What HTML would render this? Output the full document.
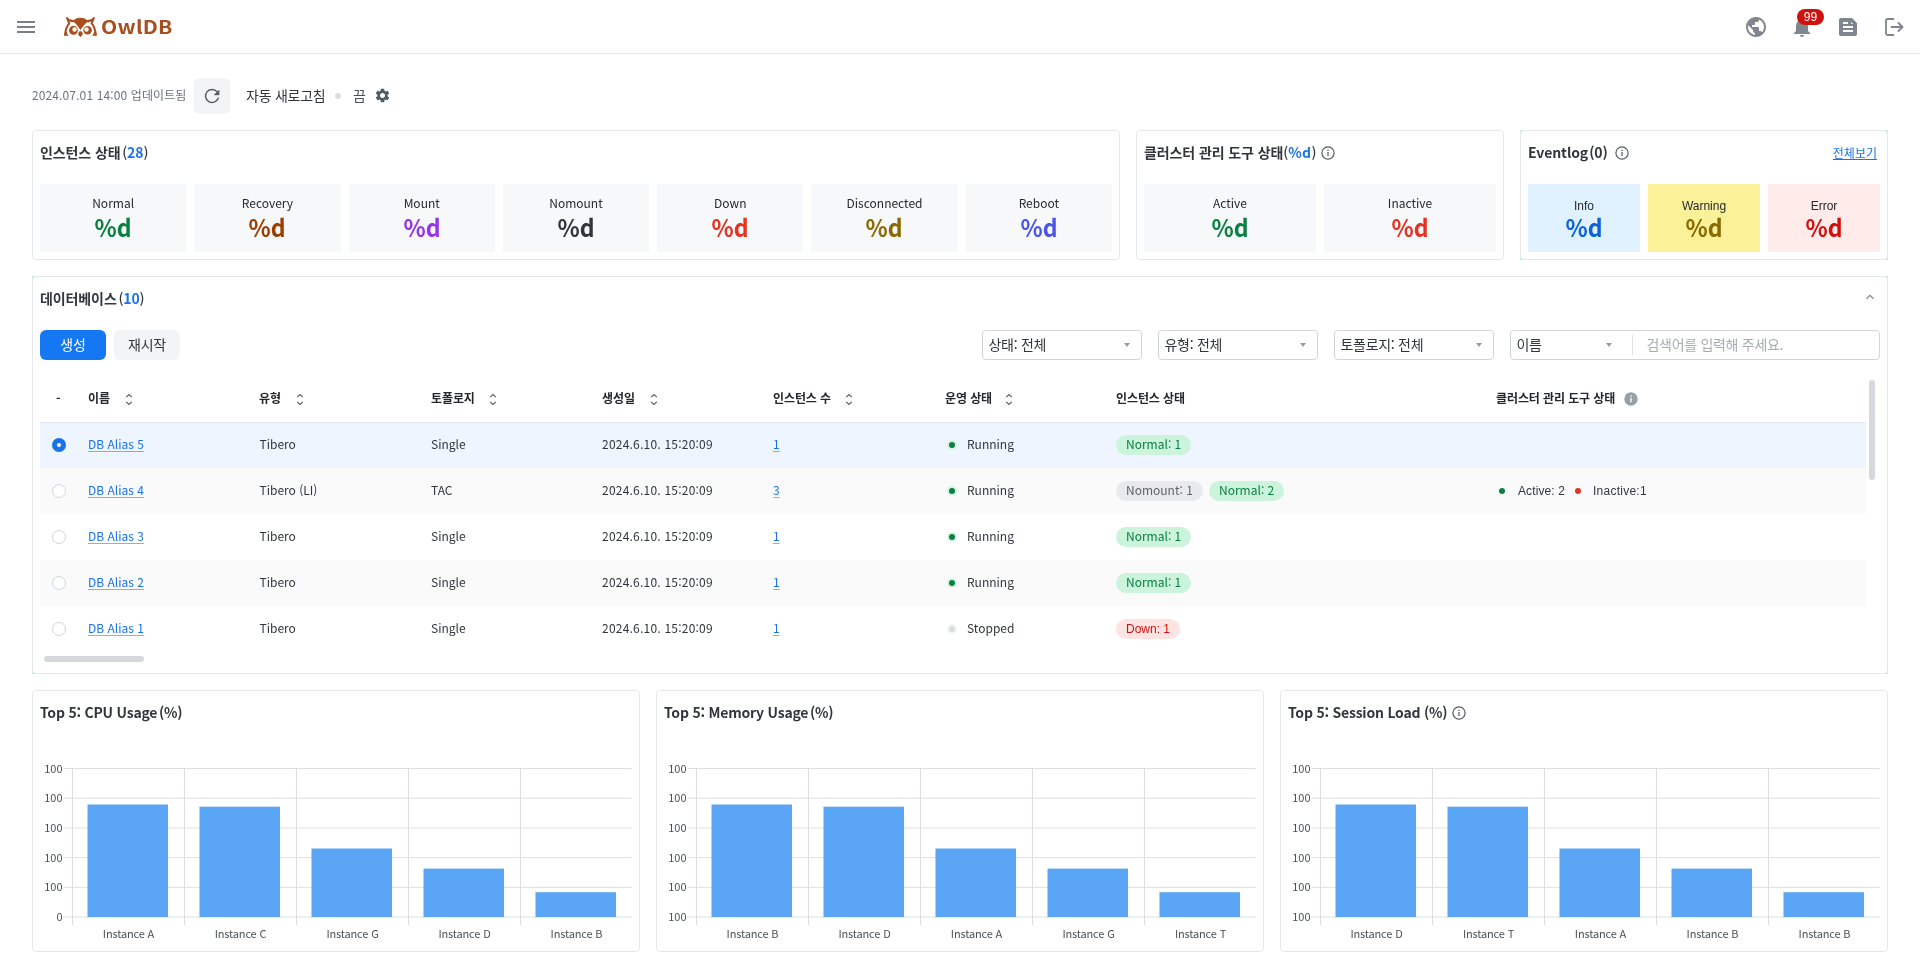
<!DOCTYPE html>
<html lang="ko">
<head>
<meta charset="utf-8">
<title>OwlDB</title>
<style>
*{box-sizing:border-box;margin:0;padding:0}
html,body{width:1920px;height:980px;overflow:hidden;background:#fff}
body{font-family:"Noto Sans CJK KR","Liberation Sans",sans-serif;font-size:12px;color:#32363c;position:relative}
#root{position:absolute;left:0;top:0;width:1920px;height:980px;will-change:transform}
svg{display:block;position:absolute;overflow:visible}
a{color:#1a73e8;text-decoration:underline;text-decoration-color:rgba(26,115,232,.55);text-underline-offset:2px}
/* header */
#hdr{position:absolute;left:0;top:0;width:1920px;height:54px;border-bottom:1px solid #e5e7eb;background:#fff}
#brand{position:absolute;left:100.800px;top:11.200px;height:30px;line-height:30px;font-family:"Noto Sans CJK KR","Liberation Sans",sans-serif;font-weight:700;font-size:18.200px;letter-spacing:.2px;transform-origin:0 50%;transform:scaleX(1.16);color:#a94f1f;white-space:nowrap}
#badge{position:absolute;left:1797px;top:9px;width:27px;height:16px;border-radius:8px;background:#d0120f;color:#fff;font-size:12px;line-height:16px;text-align:center;font-family:"Liberation Sans",sans-serif}
/* toolbar */
#upd{position:absolute;left:32px;top:85px;letter-spacing:.12px;height:20px;line-height:20px;font-size:12px;color:#6b7280;white-space:nowrap}
#rbtn{position:absolute;left:194px;top:78px;width:36px;height:36px;border-radius:5px;background:#f3f4f6}
#auto{position:absolute;left:246px;top:84px;letter-spacing:-.25px;height:22px;line-height:22px;font-size:14px;color:#32363c;white-space:nowrap}
#dot{position:absolute;left:335px;top:93px;width:6px;height:6px;border-radius:50%;background:#dadde3}
#off{position:absolute;left:353px;top:84px;height:22px;line-height:22px;font-size:14px;color:#4b5158;white-space:nowrap}
/* cards */
.card{position:absolute;border:1px solid #e5e7eb;border-radius:4px;background:#fff}
.ctitle{position:absolute;left:7px;top:9px;height:24px;line-height:24px;font-size:14px;font-weight:700;letter-spacing:-.1px;color:#32363c;white-space:nowrap}
.ctitle b{font-weight:700;color:#1a73e8}
.ctitle i{font-style:normal;font-weight:500}
.ctitle i.o{margin-left:1.700px}
.tiles{position:absolute;left:7px;right:7px;top:53px;height:68px;display:flex;gap:8px}
.tile{flex:1 1 0;background:#f7f8fa;text-align:center}
.tile .l{margin-top:10px;font-size:12px;line-height:18px;height:18px;color:#25282d}
.tile .v{font-size:24px;line-height:30px;height:30px;font-weight:700;margin-top:0px;transform:scaleX(.96)}
.ev .l{margin-top:13px;font-family:"Liberation Sans","Noto Sans CJK KR",sans-serif;font-size:12px}
.ev .v{margin-top:-3.200px}
#viewall{position:absolute;right:10px;top:12.500px;font-size:12px;line-height:18px;color:#1a73e8;text-decoration:underline;white-space:nowrap}
/* db */
.btn{position:absolute;top:53px;width:66px;height:30px;border-radius:6px;font-size:14px;line-height:28.600px;text-align:center;letter-spacing:-.25px}
.sel{position:absolute;top:53px;height:30px;border:1px solid #d1d5db;border-radius:4px;background:#fff;font-size:14px;line-height:26px;padding-left:5.500px;letter-spacing:-.3px;color:#32363c;white-space:nowrap}
.sel i{position:absolute;right:11px;top:12px;width:0;height:0;border-left:3.5px solid transparent;border-right:3.5px solid transparent;border-top:4px solid #959ba2}
.th{position:absolute;top:109px;letter-spacing:-.1px;height:24px;line-height:24px;font-size:12px;font-weight:700;color:#24272b;white-space:nowrap}
.row{position:absolute;left:7px;width:1826px;height:46px}
.row span,.row a{position:absolute;top:11px;height:22px;line-height:22px;font-size:12px;white-space:nowrap}
.row span{color:#32363c}
.rd{position:absolute;left:12px;top:16px;width:14px;height:14px;border-radius:50%;border:1px solid #d1d5db;background:#fff}
.rd.on{border:none;background:#1a73e8}
.rd.on:after{content:"";position:absolute;left:4.800px;top:4.800px;width:4.400px;height:4.400px;border-radius:50%;background:#fff}
.sd{position:absolute;top:20px;width:6px;height:6px;border-radius:50%}
.pill{position:absolute;top:13px;height:20px;line-height:18px;border-radius:10px;font-size:12px;padding:0 10px;white-space:nowrap}
.pg{background:#ccf3dc;color:#0b8043}
.pn{background:#e8eaed;color:#5f6368}
.pr{background:#fde3e1;color:#d0120f;font-family:"Liberation Sans",sans-serif;font-size:12px;line-height:20px}
</style>
</head>
<body>
<div id="root">
<div id="hdr">
  <svg style="left:14px;top:15px" width="24" height="24" viewBox="0 0 24 24"><path fill="#787f88" d="M3 18h18v-2H3v2zm0-5h18v-2H3v2zm0-7v2h18V6H3z"/></svg>
  <svg style="left:60px;top:12px" width="44" height="28" viewBox="0 0 1540 980">
<g fill="#a94f1f">
<path d="M215,175 C300,240 400,278 485,288 C545,232 625,205 715,205 C805,205 885,232 945,288 C1030,278 1130,240 1215,175 L1128,335 C1040,355 970,362 920,372 C860,430 780,525 715,628 C650,525 580,430 520,372 C470,362 400,355 312,335 Z"/>
<path d="M140,835 L310,835 C270,800 250,760 240,690 L175,690 Z"/>
<path d="M1290,835 L1120,835 C1160,800 1180,760 1190,690 L1255,690 Z"/>
<circle cx="470" cy="640" r="155"/><circle cx="966" cy="640" r="150"/>
<path d="M715,872 C660,832 632,790 638,750 C645,700 690,678 715,678 C745,678 792,700 797,750 C800,790 770,832 715,872Z"/>
</g>
<g fill="none" stroke="#a94f1f" stroke-width="72" stroke-linejoin="miter" stroke-miterlimit="6">
<path d="M236,190 L322,398 C245,480 195,620 175,810"/>
<path d="M1194,190 L1108,398 C1185,480 1235,620 1255,810"/>
</g>
<circle cx="510" cy="612" r="78" fill="#fff"/><circle cx="927" cy="612" r="76" fill="#fff"/>
</svg>
  <div id="brand">OwlDB</div>
  
<svg style="left:1744px;top:15px" width="24" height="24" viewBox="0 0 24 24"><path fill="#80868f" d="M12 2C6.48 2 2 6.48 2 12s4.48 10 10 10 10-4.48 10-10S17.52 2 12 2zm-1 17.93c-3.95-.49-7-3.85-7-7.930 0-.62.08-1.210.21-1.790L9 15v1c0 1.100.9 2 2 2v1.930zm6.900-2.540c-.26-.81-1-1.390-1.900-1.390h-1v-3c0-.55-.45-1-1-1H8v-2h2c.55 0 1-.45 1-1V7h2c1.100 0 2-.9 2-2v-.41c2.930 1.190 5 4.060 5 7.410 0 2.080-.8 3.970-2.100 5.390z"/></svg>
<svg style="left:1790px;top:15px" width="24" height="24" viewBox="0 0 24 24"><path fill="#80868f" d="M12 22c1.100 0 2-.9 2-2h-4c0 1.100.89 2 2 2zm6-6v-5c0-3.070-1.640-5.640-4.500-6.320V4c0-.83-.67-1.500-1.500-1.500s-1.500.67-1.500 1.500v.68C7.630 5.360 6 7.920 6 11v5l-2 2v1h16v-1l-2-2z"/></svg>
<svg style="left:1836px;top:15px" width="24" height="24" viewBox="0 0 24 24"><path fill="#80868f" d="M16 3H5c-1.100 0-2 .9-2 2v14c0 1.100.9 2 2 2h14c1.100 0 2-.9 2-2V8l-5-5zM7 7h5v2H7V7zm10 10H7v-2h10v2zm0-4H7v-2h10v2zm-2-4V7l2 2h-2z"/></svg>
<svg style="left:1882px;top:15px" width="24" height="24" viewBox="0 0 24 24"><g fill="none" stroke="#80868f" stroke-width="1.8" stroke-linecap="round" stroke-linejoin="round"><path d="M11.500 4H5.500c-.83 0-1.500.67-1.500 1.500v13c0 .83.67 1.500 1.500 1.500h6"/><path d="M9.500 12h11M16.500 8l4 4-4 4"/></g></svg>

  <div id="badge">99</div>
</div>
<div id="upd">2024.07.01 14:00 업데이트됨</div>
<div id="rbtn"></div>
<svg style="left:0;top:0" width="240" height="120" viewBox="0 0 240 120"><path d="M217.200 91.900A6.550 6.550 0 1 0 218.200 98.200" fill="none" stroke="#555b65" stroke-width="1.500" stroke-linecap="round"/><path d="M219.100 90.100V94.900H214z" fill="#555b65" stroke="#555b65" stroke-width=".4" stroke-linejoin="round"/></svg>
<div id="auto">자동 새로고침</div>
<div id="dot"></div>
<div id="off">끔</div>
<svg style="left:373.500px;top:87px" width="17" height="17" viewBox="0 0 24 24"><path fill="#555b65" d="M19.140 12.940c.04-.3.060-.61.060-.94 0-.32-.02-.64-.07-.94l2.030-1.580c.18-.14.230-.41.120-.61l-1.920-3.320c-.12-.22-.37-.29-.59-.22l-2.390.96c-.5-.38-1.030-.7-1.620-.94l-.36-2.540c-.04-.24-.24-.41-.48-.41h-3.840c-.24 0-.43.170-.47.410l-.36 2.540c-.59.240-1.130.57-1.620.94l-2.390-.96c-.22-.08-.47 0-.59.220L2.740 8.870c-.12.210-.08.470.12.610l2.030 1.580c-.05.3-.09.630-.09.940s.02.640.07.940l-2.030 1.580c-.18.140-.23.410-.12.610l1.920 3.320c.12.220.37.290.59.220l2.390-.96c.5.380 1.030.7 1.620.94l.36 2.540c.05.240.24.410.48.410h3.840c.24 0 .44-.17.470-.41l.36-2.540c.59-.24 1.130-.56 1.620-.94l2.390.96c.22.080.47 0 .59-.22l1.920-3.320c.12-.22.070-.47-.12-.61l-2.010-1.580zM12 15.600c-1.980 0-3.600-1.620-3.600-3.600s1.620-3.600 3.600-3.600 3.600 1.620 3.600 3.600-1.620 3.600-3.600 3.600z"/></svg>

<div class="card" style="left:32px;top:130px;width:1088px;height:130px">
  <div class="ctitle">인스턴스 상태<i class="o">(</i><b>28</b><i>)</i></div>
  <div class="tiles">
    <div class="tile"><div class="l">Normal</div><div class="v" style="color:#0b8043">%d</div></div>
    <div class="tile"><div class="l">Recovery</div><div class="v" style="color:#9a3f00">%d</div></div>
    <div class="tile"><div class="l">Mount</div><div class="v" style="color:#9334e6">%d</div></div>
    <div class="tile"><div class="l">Nomount</div><div class="v" style="color:#32363c">%d</div></div>
    <div class="tile"><div class="l">Down</div><div class="v" style="color:#e53323">%d</div></div>
    <div class="tile"><div class="l">Disconnected</div><div class="v" style="color:#8a6a00">%d</div></div>
    <div class="tile"><div class="l">Reboot</div><div class="v" style="color:#4b55e8">%d</div></div>
  </div>
</div>

<div class="card" style="left:1136px;top:130px;width:368px;height:130px">
  <div class="ctitle">클러스터 관리 도구 상태<i>(</i><b style="letter-spacing:.4px">%d</b><i>)</i></div>
  <svg style="left:184px;top:15px" width="14" height="14" viewBox="0 0 14 14"><circle cx="7" cy="7" r="6.100" fill="none" stroke="#555b65" stroke-width="1.200"/><rect x="6.400" y="6" width="1.200" height="4" fill="#555b65"/><rect x="6.350" y="3.700" width="1.300" height="1.300" fill="#555b65"/></svg>
  <div class="tiles">
    <div class="tile"><div class="l">Active</div><div class="v" style="color:#0b8043">%d</div></div>
    <div class="tile"><div class="l">Inactive</div><div class="v" style="color:#e53323">%d</div></div>
  </div>
</div>

<div style="position:absolute;left:1520px;top:130px;width:368px;height:130px;background:#c3f5d6"></div>
<div class="card" style="left:1520px;top:130px;width:368px;height:130px">
  <div class="ctitle">Eventlog<i class="o" style="font-weight:700;margin-left:1px">(</i><b style="color:inherit">0</b><i style="font-weight:700">)</i></div>
  <svg style="left:94px;top:15px" width="14" height="14" viewBox="0 0 14 14"><circle cx="7" cy="7" r="6.100" fill="none" stroke="#555b65" stroke-width="1.200"/><rect x="6.400" y="6" width="1.200" height="4" fill="#555b65"/><rect x="6.350" y="3.700" width="1.300" height="1.300" fill="#555b65"/></svg>
  <div id="viewall">전체보기</div>
  <div class="tiles ev">
    <div class="tile" style="background:#e0f2ff"><div class="l">Info</div><div class="v" style="color:#0b63d6">%d</div></div>
    <div class="tile" style="background:#fbf199"><div class="l">Warning</div><div class="v" style="color:#8a6a00">%d</div></div>
    <div class="tile" style="background:#ffebe9"><div class="l">Error</div><div class="v" style="color:#d0120f">%d</div></div>
  </div>
</div>

<div style="position:absolute;left:32px;top:276px;width:1856px;height:398px;background:#c3f5d6"></div>
<div class="card" id="db" style="left:32px;top:276px;width:1856px;height:398px">
  <div class="ctitle">데이터베이스<i class="o">(</i><b>10</b><i>)</i></div>
  <svg style="left:1831px;top:16px" width="12" height="8" viewBox="0 0 12 8"><path d="M2.500 5.800L6 2.300l3.500 3.500" fill="none" stroke="#858b93" stroke-width="1.300"/></svg>
  <div class="btn" style="left:7px;background:#1677f2;color:#fff">생성</div>
  <div class="btn" style="left:81px;background:#f3f4f6;color:#32363c">재시작</div>
  <div class="sel" style="left:949px;width:160px">상태: 전체<i></i></div>
  <div class="sel" style="left:1125px;width:160px">유형: 전체<i></i></div>
  <div class="sel" style="left:1301px;width:160px">토폴로지: 전체<i></i></div>
  <div class="sel" style="left:1477px;width:370px">이름<i style="left:95px;right:auto"></i><em style="position:absolute;left:121px;top:4px;width:1px;height:20px;background:#dfe1e5"></em><span style="position:absolute;left:135.500px;top:0;font-size:14px;letter-spacing:-.3px;color:#a7acb3">검색어를 입력해 주세요.</span></div>
  <div class="th" style="left:23px">-</div><div class="th" style="left:55px">이름</div><svg style="left:92px;top:116px" width="8" height="13" viewBox="0 0 8 13"><path d="M1.200 4.200L4 1.500l2.800 2.700M1.200 8.800L4 11.500l2.800-2.700" fill="none" stroke="#555b65" stroke-width="1.100"/></svg><div class="th" style="left:226px">유형</div><svg style="left:263px;top:116px" width="8" height="13" viewBox="0 0 8 13"><path d="M1.200 4.200L4 1.500l2.800 2.700M1.200 8.800L4 11.500l2.800-2.700" fill="none" stroke="#555b65" stroke-width="1.100"/></svg><div class="th" style="left:398px">토폴로지</div><svg style="left:456px;top:116px" width="8" height="13" viewBox="0 0 8 13"><path d="M1.200 4.200L4 1.500l2.800 2.700M1.200 8.800L4 11.500l2.800-2.700" fill="none" stroke="#555b65" stroke-width="1.100"/></svg><div class="th" style="left:569px">생성일</div><svg style="left:617px;top:116px" width="8" height="13" viewBox="0 0 8 13"><path d="M1.200 4.200L4 1.500l2.800 2.700M1.200 8.800L4 11.500l2.800-2.700" fill="none" stroke="#555b65" stroke-width="1.100"/></svg><div class="th" style="left:740px">인스턴스 수</div><svg style="left:812px;top:116px" width="8" height="13" viewBox="0 0 8 13"><path d="M1.200 4.200L4 1.500l2.800 2.700M1.200 8.800L4 11.500l2.800-2.700" fill="none" stroke="#555b65" stroke-width="1.100"/></svg><div class="th" style="left:912px">운영 상태</div><svg style="left:972px;top:116px" width="8" height="13" viewBox="0 0 8 13"><path d="M1.200 4.200L4 1.500l2.800 2.700M1.200 8.800L4 11.500l2.800-2.700" fill="none" stroke="#555b65" stroke-width="1.100"/></svg><div class="th" style="left:1083px">인스턴스 상태</div><div class="th" style="left:1463px">클러스터 관리 도구 상태</div><svg style="left:1591px;top:115px" width="14" height="14" viewBox="0 0 14 14"><circle cx="7" cy="7" r="6.700" fill="#9aa0a6"/><rect x="6.300" y="6" width="1.400" height="4.200" fill="#fff"/><rect x="6.300" y="3.600" width="1.400" height="1.400" fill="#fff"/></svg>
  <div class="row" style="top:145px;background:#eef5ff;box-shadow:inset 0 1px 0 #dfe9f7;"><div class="rd on"></div><a style="left:48px">DB Alias 5</a><span style="left:219.500px">Tibero</span><span style="left:391px">Single</span><span style="left:562px;letter-spacing:.22px">2024.6.10. 15:20:09</span><a style="left:733px">1</a><div class="sd" style="left:909px;background:#0b8043;box-shadow:0 0 0 2px #d6f5e3"></div><span style="left:927px">Running</span><div class="pill pg" style="left:1076px">Normal: 1</div></div><div class="row" style="top:191px;background:#fafafa;"><div class="rd"></div><a style="left:48px">DB Alias 4</a><span style="left:219.500px">Tibero (LI)</span><span style="left:391px">TAC</span><span style="left:562px;letter-spacing:.22px">2024.6.10. 15:20:09</span><a style="left:733px">3</a><div class="sd" style="left:909px;background:#0b8043;box-shadow:0 0 0 2px #d6f5e3"></div><span style="left:927px">Running</span><div class="pill pn" style="left:1076px">Nomount: 1</div><div class="pill pg" style="left:1169px">Normal: 2</div><div class="sd" style="left:1459px;background:#0b8043"></div><span style="left:1478px;top:12px;font-family:'Liberation Sans',sans-serif;font-size:12px;letter-spacing:.1px">Active: 2</span><div class="sd" style="left:1535px;background:#e53323"></div><span style="left:1553px;top:12px;font-family:'Liberation Sans',sans-serif;font-size:12px;letter-spacing:.25px">Inactive:1</span></div><div class="row" style="top:237px;background:#fff;"><div class="rd"></div><a style="left:48px">DB Alias 3</a><span style="left:219.500px">Tibero</span><span style="left:391px">Single</span><span style="left:562px;letter-spacing:.22px">2024.6.10. 15:20:09</span><a style="left:733px">1</a><div class="sd" style="left:909px;background:#0b8043;box-shadow:0 0 0 2px #d6f5e3"></div><span style="left:927px">Running</span><div class="pill pg" style="left:1076px">Normal: 1</div></div><div class="row" style="top:283px;background:#fafafa;"><div class="rd"></div><a style="left:48px">DB Alias 2</a><span style="left:219.500px">Tibero</span><span style="left:391px">Single</span><span style="left:562px;letter-spacing:.22px">2024.6.10. 15:20:09</span><a style="left:733px">1</a><div class="sd" style="left:909px;background:#0b8043;box-shadow:0 0 0 2px #d6f5e3"></div><span style="left:927px">Running</span><div class="pill pg" style="left:1076px">Normal: 1</div></div><div class="row" style="top:329px;background:#fff;"><div class="rd"></div><a style="left:48px">DB Alias 1</a><span style="left:219.500px">Tibero</span><span style="left:391px">Single</span><span style="left:562px;letter-spacing:.22px">2024.6.10. 15:20:09</span><a style="left:733px">1</a><div class="sd" style="left:909px;background:#dadce0;box-shadow:0 0 0 2px #f1f3f4"></div><span style="left:927px">Stopped</span><div class="pill pr" style="left:1076px">Down: 1</div></div>
  <div style="position:absolute;left:1836px;top:103px;width:6px;height:100px;border-radius:3px;background:#d5d9de"></div>
  <div style="position:absolute;left:11px;top:379px;width:100px;height:6px;border-radius:3px;background:#d5d9de"></div>
</div>

<div class="card" style="left:32px;top:690px;width:608px;height:262px"><div class="ctitle" style="top:8.600px;letter-spacing:-.22px">Top 5: CPU Usage<i class="o" style="font-weight:700">(</i>%<i style="font-weight:700">)</i></div><svg style="left:0;top:0" width="606" height="259" viewBox="0 0 606 259" font-family="Noto Sans CJK KR, Liberation Sans, sans-serif" font-size="11" fill="#4b5158"><line x1="30.5" y1="77.5" x2="598.7" y2="77.5" stroke="#dddee4" stroke-width="1"/><line x1="30.5" y1="107.2" x2="598.7" y2="107.2" stroke="#dddee4" stroke-width="1"/><line x1="30.5" y1="136.9" x2="598.7" y2="136.9" stroke="#dddee4" stroke-width="1"/><line x1="30.5" y1="166.6" x2="598.7" y2="166.6" stroke="#dddee4" stroke-width="1"/><line x1="30.5" y1="196.3" x2="598.7" y2="196.3" stroke="#dddee4" stroke-width="1"/><line x1="30.5" y1="226" x2="598.7" y2="226" stroke="#dddee4" stroke-width="1"/><line x1="39.5" y1="77.5" x2="39.5" y2="234" stroke="#dddee4" stroke-width="1"/><line x1="151.5" y1="77.5" x2="151.5" y2="234" stroke="#dddee4" stroke-width="1"/><line x1="263.5" y1="77.5" x2="263.5" y2="234" stroke="#dddee4" stroke-width="1"/><line x1="375.5" y1="77.5" x2="375.5" y2="234" stroke="#dddee4" stroke-width="1"/><line x1="487.5" y1="77.5" x2="487.5" y2="234" stroke="#dddee4" stroke-width="1"/><text x="29.5" y="81.5" text-anchor="end">100</text><text x="29.5" y="111.2" text-anchor="end">100</text><text x="29.5" y="140.9" text-anchor="end">100</text><text x="29.5" y="170.6" text-anchor="end">100</text><text x="29.5" y="200.3" text-anchor="end">100</text><text x="29.5" y="230" text-anchor="end">0</text><rect x="54.5" y="113.5" width="80.500" height="112.5" fill="#5ba5f5"/><text x="95.5" y="247" text-anchor="middle" letter-spacing="-.15">Instance A</text><rect x="166.5" y="115.7" width="80.500" height="110.3" fill="#5ba5f5"/><text x="207.5" y="247" text-anchor="middle" letter-spacing="-.15">Instance C</text><rect x="278.5" y="157.5" width="80.500" height="68.5" fill="#5ba5f5"/><text x="319.5" y="247" text-anchor="middle" letter-spacing="-.15">Instance G</text><rect x="390.5" y="177.6" width="80.500" height="48.4" fill="#5ba5f5"/><text x="431.5" y="247" text-anchor="middle" letter-spacing="-.15">Instance D</text><rect x="502.5" y="201.2" width="80.500" height="24.8" fill="#5ba5f5"/><text x="543.5" y="247" text-anchor="middle" letter-spacing="-.15">Instance B</text></svg></div><div class="card" style="left:656px;top:690px;width:608px;height:262px"><div class="ctitle" style="top:8.600px;letter-spacing:-.22px">Top 5: Memory Usage<i class="o" style="font-weight:700">(</i>%<i style="font-weight:700">)</i></div><svg style="left:0;top:0" width="606" height="259" viewBox="0 0 606 259" font-family="Noto Sans CJK KR, Liberation Sans, sans-serif" font-size="11" fill="#4b5158"><line x1="30.5" y1="77.5" x2="598.7" y2="77.5" stroke="#dddee4" stroke-width="1"/><line x1="30.5" y1="107.2" x2="598.7" y2="107.2" stroke="#dddee4" stroke-width="1"/><line x1="30.5" y1="136.9" x2="598.7" y2="136.9" stroke="#dddee4" stroke-width="1"/><line x1="30.5" y1="166.6" x2="598.7" y2="166.6" stroke="#dddee4" stroke-width="1"/><line x1="30.5" y1="196.3" x2="598.7" y2="196.3" stroke="#dddee4" stroke-width="1"/><line x1="30.5" y1="226" x2="598.7" y2="226" stroke="#dddee4" stroke-width="1"/><line x1="39.5" y1="77.5" x2="39.5" y2="234" stroke="#dddee4" stroke-width="1"/><line x1="151.5" y1="77.5" x2="151.5" y2="234" stroke="#dddee4" stroke-width="1"/><line x1="263.5" y1="77.5" x2="263.5" y2="234" stroke="#dddee4" stroke-width="1"/><line x1="375.5" y1="77.5" x2="375.5" y2="234" stroke="#dddee4" stroke-width="1"/><line x1="487.5" y1="77.5" x2="487.5" y2="234" stroke="#dddee4" stroke-width="1"/><text x="29.5" y="81.5" text-anchor="end">100</text><text x="29.5" y="111.2" text-anchor="end">100</text><text x="29.5" y="140.9" text-anchor="end">100</text><text x="29.5" y="170.6" text-anchor="end">100</text><text x="29.5" y="200.3" text-anchor="end">100</text><text x="29.5" y="230" text-anchor="end">100</text><rect x="54.5" y="113.5" width="80.500" height="112.5" fill="#5ba5f5"/><text x="95.5" y="247" text-anchor="middle" letter-spacing="-.15">Instance B</text><rect x="166.5" y="115.7" width="80.500" height="110.3" fill="#5ba5f5"/><text x="207.5" y="247" text-anchor="middle" letter-spacing="-.15">Instance D</text><rect x="278.5" y="157.5" width="80.500" height="68.5" fill="#5ba5f5"/><text x="319.5" y="247" text-anchor="middle" letter-spacing="-.15">Instance A</text><rect x="390.5" y="177.6" width="80.500" height="48.4" fill="#5ba5f5"/><text x="431.5" y="247" text-anchor="middle" letter-spacing="-.15">Instance G</text><rect x="502.5" y="201.2" width="80.500" height="24.8" fill="#5ba5f5"/><text x="543.5" y="247" text-anchor="middle" letter-spacing="-.15">Instance T</text></svg></div><div class="card" style="left:1280px;top:690px;width:608px;height:262px"><div class="ctitle" style="top:8.600px;letter-spacing:-.22px">Top 5: Session Load (%)</div><svg style="left:171px;top:15px" width="14" height="14" viewBox="0 0 14 14"><circle cx="7" cy="7" r="6.100" fill="none" stroke="#555b65" stroke-width="1.200"/><rect x="6.400" y="6" width="1.200" height="4" fill="#555b65"/><rect x="6.350" y="3.700" width="1.300" height="1.300" fill="#555b65"/></svg><svg style="left:0;top:0" width="606" height="259" viewBox="0 0 606 259" font-family="Noto Sans CJK KR, Liberation Sans, sans-serif" font-size="11" fill="#4b5158"><line x1="30.5" y1="77.5" x2="598.7" y2="77.5" stroke="#dddee4" stroke-width="1"/><line x1="30.5" y1="107.2" x2="598.7" y2="107.2" stroke="#dddee4" stroke-width="1"/><line x1="30.5" y1="136.9" x2="598.7" y2="136.9" stroke="#dddee4" stroke-width="1"/><line x1="30.5" y1="166.6" x2="598.7" y2="166.6" stroke="#dddee4" stroke-width="1"/><line x1="30.5" y1="196.3" x2="598.7" y2="196.3" stroke="#dddee4" stroke-width="1"/><line x1="30.5" y1="226" x2="598.7" y2="226" stroke="#dddee4" stroke-width="1"/><line x1="39.5" y1="77.5" x2="39.5" y2="234" stroke="#dddee4" stroke-width="1"/><line x1="151.5" y1="77.5" x2="151.5" y2="234" stroke="#dddee4" stroke-width="1"/><line x1="263.5" y1="77.5" x2="263.5" y2="234" stroke="#dddee4" stroke-width="1"/><line x1="375.5" y1="77.5" x2="375.5" y2="234" stroke="#dddee4" stroke-width="1"/><line x1="487.5" y1="77.5" x2="487.5" y2="234" stroke="#dddee4" stroke-width="1"/><text x="29.5" y="81.5" text-anchor="end">100</text><text x="29.5" y="111.2" text-anchor="end">100</text><text x="29.5" y="140.9" text-anchor="end">100</text><text x="29.5" y="170.6" text-anchor="end">100</text><text x="29.5" y="200.3" text-anchor="end">100</text><text x="29.5" y="230" text-anchor="end">100</text><rect x="54.5" y="113.5" width="80.500" height="112.5" fill="#5ba5f5"/><text x="95.5" y="247" text-anchor="middle" letter-spacing="-.15">Instance D</text><rect x="166.5" y="115.7" width="80.500" height="110.3" fill="#5ba5f5"/><text x="207.5" y="247" text-anchor="middle" letter-spacing="-.15">Instance T</text><rect x="278.5" y="157.5" width="80.500" height="68.5" fill="#5ba5f5"/><text x="319.5" y="247" text-anchor="middle" letter-spacing="-.15">Instance A</text><rect x="390.5" y="177.6" width="80.500" height="48.4" fill="#5ba5f5"/><text x="431.5" y="247" text-anchor="middle" letter-spacing="-.15">Instance B</text><rect x="502.5" y="201.2" width="80.500" height="24.8" fill="#5ba5f5"/><text x="543.5" y="247" text-anchor="middle" letter-spacing="-.15">Instance B</text></svg></div>
</div>
</body>
</html>
